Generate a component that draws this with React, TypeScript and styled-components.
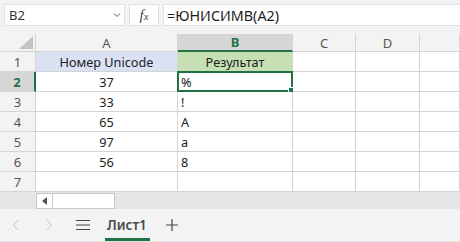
import React from "react";
import styled, { createGlobalStyle } from "styled-components";

const GlobalStyle = createGlobalStyle`
  body {
    margin: 0;
    font-family: "Noto Sans", "Open Sans", sans-serif;
    background: #f3f3f3;
  }
`;

const green = "#217346";
const gridLine = "#d4d4d4";

const Page = styled.div`
  width: 460px;
  height: 242px;
  overflow: hidden;
  background: #f3f3f3;
  display: flex;
  flex-direction: column;
`;

const FormulaBar = styled.div`
  height: 34px;
  box-sizing: border-box;
  padding: 4px 0 0 4px;
  display: flex;
  gap: 4px;
`;

const Box = styled.div<{ $w?: number }>`
  height: 22px;
  box-sizing: border-box;
  background: #fff;
  border: 1px solid #e1e1e1;
  display: flex;
  align-items: center;
  ${(p) => (p.$w ? `width: ${p.$w}px;` : "flex: 1; margin-right: -4px;")}
`;

const NameText = styled.span`
  flex: 1;
  padding-left: 4px;
  font-size: 13px;
  color: #333;
`;

const Chevron = styled.svg`
  margin-right: 3px;
`;

const FxText = styled.span`
  width: 100%;
  text-align: center;
  font-family: "Liberation Serif", serif;
  font-style: italic;
  font-size: 15px;
  color: #444;
  sub {
    font-size: 11px;
    vertical-align: baseline;
  }
`;

const FormulaText = styled.span`
  padding-left: 3px;
  font-size: 14.3px;
  color: #222;
`;

const Grid = styled.div`
  display: grid;
  grid-template-columns: 36px 142px 115px 63px 64px 1fr;
  grid-template-rows: 18px repeat(7, 20px);
`;

const Corner = styled.div`
  background: #f3f3f3;
  border-right: 1px solid ${gridLine};
  border-bottom: 1px solid ${gridLine};
  box-sizing: border-box;
  display: flex;
  justify-content: flex-end;
  align-items: flex-end;
  padding: 0 2px 2px 0;
`;

const ColHead = styled.div<{ $sel?: boolean }>`
  box-sizing: border-box;
  background: ${(p) => (p.$sel ? "#d6d6d6" : "#f3f3f3")};
  border-right: 1px solid ${gridLine};
  border-bottom: ${(p) => (p.$sel ? `2px solid ${green}` : `1px solid ${gridLine}`)};
  display: flex;
  align-items: center;
  justify-content: center;
  font-size: 13px;
  color: ${(p) => (p.$sel ? green : "#555")};
  font-weight: ${(p) => (p.$sel ? 700 : 400)};
`;

const RowHead = styled.div<{ $sel?: boolean }>`
  box-sizing: border-box;
  background: ${(p) => (p.$sel ? "#d6d6d6" : "#f3f3f3")};
  border-right: ${(p) => (p.$sel ? `2px solid ${green}` : `1px solid ${gridLine}`)};
  border-bottom: 1px solid ${gridLine};
  display: flex;
  align-items: center;
  justify-content: center;
  font-size: 13px;
  color: ${(p) => (p.$sel ? green : "#555")};
  font-weight: ${(p) => (p.$sel ? 700 : 400)};
`;

const Cell = styled.div<{ $bg?: string; $align?: string }>`
  position: relative;
  box-sizing: border-box;
  background: ${(p) => p.$bg || "#fff"};
  border-right: 1px solid ${gridLine};
  border-bottom: 1px solid ${gridLine};
  display: flex;
  align-items: center;
  justify-content: ${(p) => p.$align || "flex-start"};
  padding: 0 3px;
  font-size: 12.7px;
  color: #222;
  white-space: nowrap;
`;

const Selection = styled.div`
  position: absolute;
  top: -1px;
  left: -1px;
  right: -1px;
  bottom: -1px;
  border: 2px solid ${green};
  pointer-events: none;
  &::after {
    content: "";
    position: absolute;
    right: -4px;
    bottom: -4px;
    width: 5px;
    height: 5px;
    background: ${green};
    border: 1px solid #fff;
  }
`;

const ScrollStrip = styled.div`
  height: 17px;
  background: #e6e6e6;
  display: flex;
  align-items: center;
  padding-left: 36px;
`;

const ScrollBtn = styled.div<{ $w: number }>`
  width: ${(p) => p.$w}px;
  height: 16px;
  box-sizing: border-box;
  background: #fff;
  border: 1px solid #c8c8c8;
  display: flex;
  align-items: center;
  justify-content: center;
  & + & {
    border-left: none;
  }
`;

const TabBar = styled.div`
  flex: 1;
  background: #f3f3f3;
  border-bottom: 1px solid #e1e1e1;
  display: flex;
  align-items: center;
`;

const NavIcon = styled.div<{ $w: number; $dim?: boolean }>`
  width: ${(p) => p.$w}px;
  height: 30px;
  display: flex;
  align-items: center;
  justify-content: center;
  color: ${(p) => (p.$dim ? "#c2c2c2" : "#444")};
`;

const SheetTab = styled.div`
  position: relative;
  height: 32px;
  padding: 0 5px 0 6px;
  display: flex;
  align-items: center;
  font-size: 13.5px;
  font-weight: 600;
  color: #4a4a4a;
  &::after {
    content: "";
    position: absolute;
    left: 4px;
    right: 2px;
    bottom: 0;
    height: 3px;
    background: ${green};
  }
`;

const rows: [number, string][] = [
  [37, "%"],
  [33, "!"],
  [65, "A"],
  [97, "a"],
  [56, "8"],
];

export default function App() {
  return (
    <Page>
      <GlobalStyle />
      <FormulaBar>
        <Box $w={121}>
          <NameText>B2</NameText>
          <Chevron width="8" height="6" viewBox="0 0 8 6">
            <path d="M1 1.5 L4 4.5 L7 1.5" fill="none" stroke="#555" strokeWidth="1" />
          </Chevron>
        </Box>
        <Box $w={30}>
          <FxText>
            f<sub>x</sub>
          </FxText>
        </Box>
        <Box>
          <FormulaText>=ЮНИСИМВ(А2)</FormulaText>
        </Box>
      </FormulaBar>

      <Grid>
        <Corner>
          <svg width="14" height="13" viewBox="0 0 14 13">
            <path d="M14 0 L14 13 L0 13 Z" fill="#c4c4c4" />
          </svg>
        </Corner>
        <ColHead>A</ColHead>
        <ColHead $sel>B</ColHead>
        <ColHead>C</ColHead>
        <ColHead>D</ColHead>
        <ColHead />

        <RowHead>1</RowHead>
        <Cell $bg="#d9e1f2" $align="center">Номер Unicode</Cell>
        <Cell $bg="#c6e0b4" $align="center">Результат</Cell>
        <Cell />
        <Cell />
        <Cell />

        {rows.map(([code, ch], i) => (
          <React.Fragment key={i}>
            <RowHead $sel={i === 0}>{i + 2}</RowHead>
            <Cell $align="center">{code}</Cell>
            <Cell>
              {ch}
              {i === 0 && <Selection />}
            </Cell>
            <Cell />
            <Cell />
            <Cell />
          </React.Fragment>
        ))}

        <RowHead>7</RowHead>
        <Cell />
        <Cell />
        <Cell />
        <Cell />
        <Cell />
      </Grid>

      <ScrollStrip>
        <ScrollBtn $w={17}>
          <svg width="6" height="8" viewBox="0 0 6 8">
            <path d="M5 0 L5 8 L0 4 Z" fill="#555" />
          </svg>
        </ScrollBtn>
        <ScrollBtn $w={62} />
      </ScrollStrip>

      <TabBar>
        <NavIcon $w={32} $dim>
          <svg width="8" height="12" viewBox="0 0 8 12">
            <path d="M6 1 L1.5 6 L6 11" fill="none" stroke="currentColor" strokeWidth="1" />
          </svg>
        </NavIcon>
        <NavIcon $w={33} $dim>
          <svg width="8" height="12" viewBox="0 0 8 12">
            <path d="M2 1 L6.5 6 L2 11" fill="none" stroke="currentColor" strokeWidth="1" />
          </svg>
        </NavIcon>
        <NavIcon $w={36}>
          <svg width="14" height="10" viewBox="0 0 14 10">
            <path d="M0 0.5 H14 M0 5 H14 M0 9.5 H14" stroke="currentColor" strokeWidth="1" />
          </svg>
        </NavIcon>
        <SheetTab>Лист1</SheetTab>
        <NavIcon $w={40}>
          <svg width="12" height="12" viewBox="0 0 12 12">
            <path d="M6 0 V12 M0 6 H12" stroke="currentColor" strokeWidth="1.2" />
          </svg>
        </NavIcon>
      </TabBar>
    </Page>
  );
}
